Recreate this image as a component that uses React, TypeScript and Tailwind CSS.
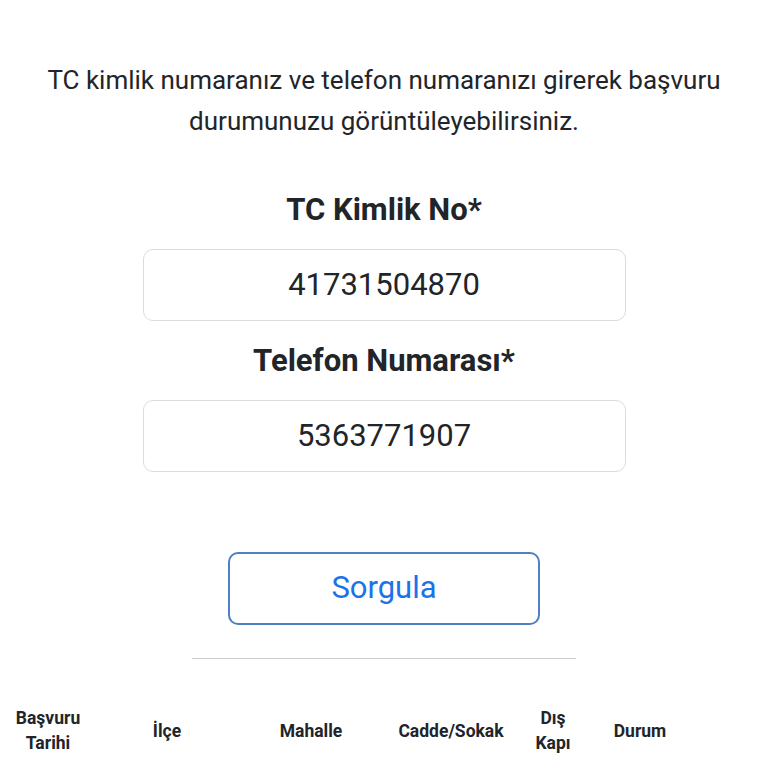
import React from "react";

const columns = [
  { label: "Başvuru Tarihi", width: "w-[96px]" },
  { label: "İlçe", width: "w-[142px]" },
  { label: "Mahalle", width: "w-[146px]" },
  { label: "Cadde/Sokak", width: "w-[134px]" },
  { label: "Dış Kapı", width: "w-[70px]" },
  { label: "Durum", width: "w-[104px]" },
];

const App: React.FC = () => {
  return (
    <div className="min-h-[768px] bg-white font-['Roboto',sans-serif] text-[#212529] overflow-hidden">
      <p className="pt-[60px] px-10 text-center text-[26px] leading-[41px] text-[#212529]">
        TC kimlik numaranız ve telefon numaranızı girerek başvuru durumunuzu görüntüleyebilirsiniz.
      </p>

      <div className="mt-[48px] flex flex-col items-center">
        <label className="text-[31px] font-bold leading-[40px]">TC Kimlik No*</label>
        <div className="mt-[19px] w-[483px] h-[72px] rounded-[10px] border border-[#dcdcdc] flex items-center justify-center text-[31px]">
          41731504870
        </div>

        <label className="mt-[20px] text-[31px] font-bold leading-[40px]">Telefon Numarası*</label>
        <div className="mt-[19px] w-[483px] h-[72px] rounded-[10px] border border-[#dcdcdc] flex items-center justify-center text-[31px]">
          5363771907
        </div>

        <button className="mt-[80px] w-[312px] h-[73px] rounded-[10px] border-2 border-[#4d80c4] text-[#1a73e8] text-[31px]">
          Sorgula
        </button>

        <div className="mt-[33px] w-[384px] h-px bg-[#cfcfcf]" />
      </div>

      <div className="mt-[47px] flex items-center">
        {columns.map((col) => (
          <div
            key={col.label}
            className={`${col.width} shrink-0 text-center text-[17.5px] font-bold leading-[25px] px-3`}
          >
            {col.label}
          </div>
        ))}
      </div>
    </div>
  );
};

export default App;
